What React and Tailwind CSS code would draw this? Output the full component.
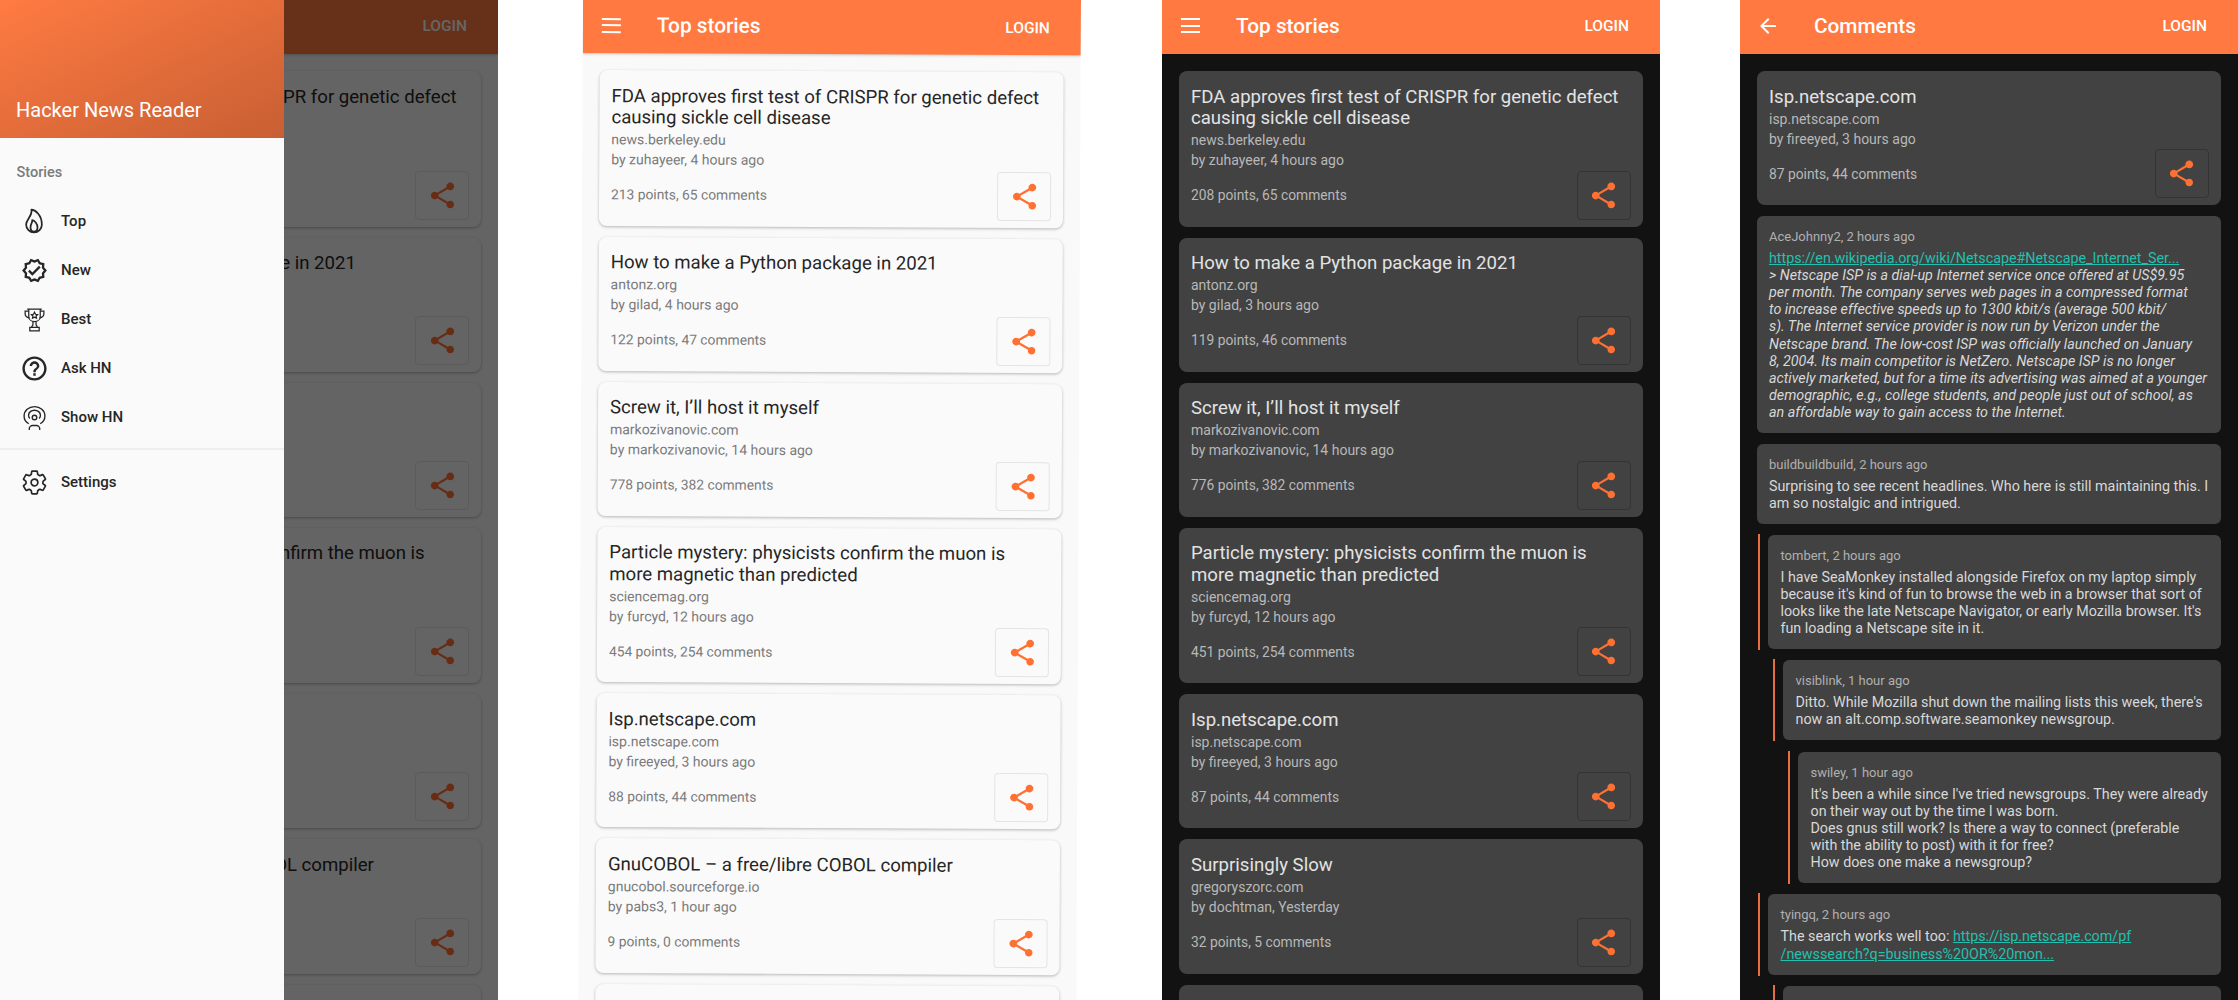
import React from "react";
import { MdShare, MdOutlineVerified, MdOutlineHelpOutline, MdArrowBack } from "react-icons/md";
import { IoFlameOutline, IoSettingsOutline } from "react-icons/io5";

const lightStories = [
  { title: "FDA approves first test of CRISPR for genetic defect causing sickle cell disease", site: "news.berkeley.edu", by: "by zuhayeer, 4 hours ago", stats: "213 points, 65 comments" },
  { title: "How to make a Python package in 2021", site: "antonz.org", by: "by gilad, 4 hours ago", stats: "122 points, 47 comments" },
  { title: "Screw it, I’ll host it myself", site: "markozivanovic.com", by: "by markozivanovic, 14 hours ago", stats: "778 points, 382 comments" },
  { title: "Particle mystery: physicists confirm the muon is more magnetic than predicted", site: "sciencemag.org", by: "by furcyd, 12 hours ago", stats: "454 points, 254 comments" },
  { title: "Isp.netscape.com", site: "isp.netscape.com", by: "by fireeyed, 3 hours ago", stats: "88 points, 44 comments" },
  { title: "GnuCOBOL – a free/libre COBOL compiler", site: "gnucobol.sourceforge.io", by: "by pabs3, 1 hour ago", stats: "9 points, 0 comments" },
];

const darkStories = [
  { title: "FDA approves first test of CRISPR for genetic defect causing sickle cell disease", site: "news.berkeley.edu", by: "by zuhayeer, 4 hours ago", stats: "208 points, 65 comments" },
  { title: "How to make a Python package in 2021", site: "antonz.org", by: "by gilad, 3 hours ago", stats: "119 points, 46 comments" },
  { title: "Screw it, I’ll host it myself", site: "markozivanovic.com", by: "by markozivanovic, 14 hours ago", stats: "776 points, 382 comments" },
  { title: "Particle mystery: physicists confirm the muon is more magnetic than predicted", site: "sciencemag.org", by: "by furcyd, 12 hours ago", stats: "451 points, 254 comments" },
  { title: "Isp.netscape.com", site: "isp.netscape.com", by: "by fireeyed, 3 hours ago", stats: "87 points, 44 comments" },
  { title: "Surprisingly Slow", site: "gregoryszorc.com", by: "by dochtman, Yesterday", stats: "32 points, 5 comments" },
];

const TrophyIcon = () => (
  <svg width="25" height="25" viewBox="0 0 24 24" fill="none" stroke="currentColor" strokeWidth="1.2">
    <path d="M5 2h14M6.500 2v7c0 3 2.500 5 5.500 5s5.500-2 5.500-5V2" />
    <path d="M6.500 4H3v2.500C3 8.500 4.500 10 7 10.500M17.500 4H21v2.500c0 2-1.500 3.500-4 4" />
    <path d="M12 5l1 2 2 .3-1.500 1.400.4 2-1.900-1-1.900 1 .4-2L9 7.300l2-.3z" />
    <path d="M10.500 14v3l-1.500 2.500h6L13.500 17v-3M7.500 19.500h9V23h-9z" />
  </svg>
);

const ShowIcon = () => (
  <svg width="25" height="25" viewBox="0 0 24 24" fill="none" stroke="currentColor" strokeWidth="1.300">
    <path d="M6.500 18C3.500 16.300 2 13.500 2 10.500 2 5.500 6.500 1.500 12 1.500s10 4 10 9c0 3-1.500 5.800-4.500 7.500" />
    <path d="M7.500 13C6.700 12 6.300 11 6.300 9.800 6.300 7 8.900 5 12 5s5.700 2 5.700 4.800c0 1.200-.4 2.200-1.200 3.200" />
    <circle cx="12" cy="12" r="2.200" />
    <path d="M7 24v-1.500c0-1.500 1.500-2.800 3-2.800h4c1.500 0 3 1.300 3 2.800V24" />
  </svg>
);

const ShareButton = ({ dark }) => (
  <div className={`w-[54px] h-[49px] shrink-0 flex items-center justify-center rounded border text-[#ff7033] ${dark ? "border-[#343434]" : "border-[#e4e4e4]"}`}>
    <MdShare size={31} />
  </div>
);

const StoryCard = ({ story, dark }) => (
  <div className={`rounded-[8px] pt-[15.500px] pr-[12px] pb-[7px] pl-[12px] ${dark ? "bg-[#424242]" : "bg-[#fafafa] shadow-[0_1px_3px_rgba(0,0,0,0.28)]"}`}>
    <div className={`text-[18.600px] leading-[21.500px] mb-[0.500px] ${dark ? "text-[#e3e3e3]" : "text-[#262626]"}`}>{story.title}</div>
    <div className={`text-[14px] leading-[20.300px] ${dark ? "text-[#b8b8b8]" : "text-[#7b7b7b]"}`}>{story.site}</div>
    <div className={`text-[14px] leading-[20.300px] ${dark ? "text-[#b8b8b8]" : "text-[#7b7b7b]"}`}>{story.by}</div>
    <div className="flex items-center justify-between">
      <span className={`text-[13.800px] pt-[1px] ${dark ? "text-[#b8b8b8]" : "text-[#7b7b7b]"}`}>{story.stats}</span>
      <ShareButton dark={dark} />
    </div>
  </div>
);

const AppBar = ({ title, back, shadow, className = "h-[54px]" }) => (
  <div className={`bg-[#ff7940] flex items-center pl-[19px] pr-[31px] text-white relative ${className} ${shadow ? "shadow-[0_1px_3px_rgba(0,0,0,0.2)]" : ""}`}>
    <div className="w-[55px] shrink-0">
      {back ? (
        <MdArrowBack size={24} className="-ml-[3px] -mt-[3px]" />
      ) : (
        <div className="w-[19px] flex flex-col gap-[4.500px] -mt-[3px]">
          <div className="h-[2px] bg-white" />
          <div className="h-[2px] bg-white" />
          <div className="h-[2px] bg-white" />
        </div>
      )}
    </div>
    <div className="text-[20.800px] font-medium flex-1 -mt-[1px]">{title}</div>
    <div className="text-[15.500px] font-medium">LOGIN</div>
  </div>
);

const StoryList = ({ stories, dark }) => (
  <div className="px-[17px] pt-[17px] flex flex-col gap-[11px]">
    {stories.map((s) => (
      <StoryCard key={s.title} story={s} dark={dark} />
    ))}
    <div className={`h-[134px] rounded-[8px] shrink-0 ${dark ? "bg-[#424242]" : "bg-[#fafafa] shadow-[0_1px_3px_rgba(0,0,0,0.28)]"}`} />
  </div>
);

const DrawerItem = ({ icon, label }) => (
  <div className="h-[49px] flex items-center text-[#262626]">
    <div className="w-[61px] flex justify-center pl-[7px] shrink-0">{icon}</div>
    <span className="text-[15px] font-medium">{label}</span>
  </div>
);

const Drawer = () => (
  <div className="absolute left-0 top-0 bottom-0 w-[284px] bg-[#fafafa]">
    <div className="h-[138px] bg-gradient-to-br from-[#ff7b42] to-[#c85f33] flex items-end px-[16px] pb-[13px]">
      <span className="text-[20px] text-white">Hacker News Reader</span>
    </div>
    <div className="text-[14.500px] font-medium text-[#7b7b7b] pl-[16.500px] pt-[24px] pb-[13px]">Stories</div>
    <div className="border-b-2 border-[#eeeeee] pb-[6px]">
      <DrawerItem icon={<IoFlameOutline size={28} />} label="Top" />
      <DrawerItem icon={<MdOutlineVerified size={27} />} label="New" />
      <DrawerItem icon={<TrophyIcon />} label="Best" />
      <DrawerItem icon={<MdOutlineHelpOutline size={29} />} label="Ask HN" />
      <DrawerItem icon={<ShowIcon />} label="Show HN" />
    </div>
    <div className="pt-[8px]">
      <DrawerItem icon={<IoSettingsOutline size={27} />} label="Settings" />
    </div>
  </div>
);

const CommentCard = ({ author, children }) => (
  <div className="bg-[#424242] rounded-[6px] px-[12px] pt-[12px] pb-[12px]">
    <div className="text-[13px] leading-[17px] text-[#b0b0b0] mb-[5px]">{author}</div>
    <div className="text-[14.300px] leading-[17.100px] text-[#d8d8d8]">{children}</div>
  </div>
);

const Nested = ({ indent, author, children }) => (
  <div className={`border-l-2 border-[#e56f3f] pl-[8.500px] py-[1px] ${indent}`}>
    <CommentCard author={author}>{children}</CommentCard>
  </div>
);

const Link = ({ children }) => <span className="text-[#22c0ae] underline not-italic">{children}</span>;

const quoteLines = [
  "> Netscape ISP is a dial-up Internet service once offered at US$9.95",
  "per month. The company serves web pages in a compressed format",
  "to increase effective speeds up to 1300 kbit/s (average 500 kbit/",
  "s). The Internet service provider is now run by Verizon under the",
  "Netscape brand. The low-cost ISP was officially launched on January",
  "8, 2004. Its main competitor is NetZero. Netscape ISP is no longer",
  "actively marketed, but for a time its advertising was aimed at a younger",
  "demographic, e.g., college students, and people just out of school, as",
  "an affordable way to gain access to the Internet.",
];

const CommentsScreen = () => (
  <div className="w-[498px] h-full bg-[#121212] shrink-0 ml-[80px] overflow-hidden">
    <AppBar title="Comments" back />
    <div className="px-[17px] pt-[17px]">
      <StoryCard dark story={{ title: "Isp.netscape.com", site: "isp.netscape.com", by: "by fireeyed, 3 hours ago", stats: "87 points, 44 comments" }} />
      <div className="flex flex-col gap-[9.300px] mt-[11px]">
        <div className="flex flex-col gap-[11px]">
          <CommentCard author="AceJohnny2, 2 hours ago">
            <Link>https://en.wikipedia.org/wiki/Netscape#Netscape_Internet_Ser...</Link>
            {quoteLines.map((line) => (
              <div key={line} className="italic whitespace-nowrap">{line}</div>
            ))}
          </CommentCard>
          <CommentCard author="buildbuildbuild, 2 hours ago">
            Surprising to see recent headlines. Who here is still maintaining this. I am so nostalgic and intrigued.
          </CommentCard>
        </div>
        <Nested indent="ml-[1px]" author="tombert, 2 hours ago">
          I have SeaMonkey installed alongside Firefox on my laptop simply because it's kind of fun to browse the web in a browser that sort of looks like the late Netscape Navigator, or early Mozilla browser. It's fun loading a Netscape site in it.
        </Nested>
        <Nested indent="ml-[16px]" author="visiblink, 1 hour ago">
          Ditto. While Mozilla shut down the mailing lists this week, there's now an alt.comp.software.seamonkey newsgroup.
        </Nested>
        <Nested indent="ml-[31px]" author="swiley, 1 hour ago">
          It's been a while since I've tried newsgroups. They were already on their way out by the time I was born.
          <br />
          Does gnus still work? Is there a way to connect (preferable with the ability to post) with it for free?
          <br />
          How does one make a newsgroup?
        </Nested>
        <Nested indent="ml-[1px]" author="tyingq, 2 hours ago">
          The search works well too: <Link>https://isp.netscape.com/pf</Link>
          <br />
          <Link>/newssearch?q=business%20OR%20mon...</Link>
        </Nested>
        <Nested indent="ml-[16px]" author="">
          <div className="h-[40px]" />
        </Nested>
      </div>
    </div>
  </div>
);

const App = () => {
  return (
    <div className="w-[2238px] h-[1000px] overflow-hidden bg-white flex font-['Roboto',sans-serif]">
      {/* drawer open over the light list */}
      <div className="w-[498px] h-full bg-[#f9f9f9] shrink-0 relative overflow-hidden">
        <AppBar title="Top stories" shadow />
        <StoryList stories={lightStories} />
        <div className="absolute inset-0 bg-black/60" />
        <Drawer />
      </div>

      {/* light list, slightly tilted in the original shot; starts above the page so no wedge shows */}
      <div className="w-[498px] h-[1016px] -mt-[3px] bg-[#f9f9f9] shrink-0 ml-[85.300px] overflow-hidden rotate-[0.27deg] origin-top-left">
        <AppBar title="Top stories" shadow className="h-[56px] pt-[3px]" />
        <StoryList stories={lightStories} />
      </div>

      {/* dark list */}
      <div className="w-[498px] h-full bg-[#121212] shrink-0 ml-[80.700px] overflow-hidden">
        <AppBar title="Top stories" />
        <StoryList stories={darkStories} dark />
      </div>

      <CommentsScreen />
    </div>
  );
};

export default App;
